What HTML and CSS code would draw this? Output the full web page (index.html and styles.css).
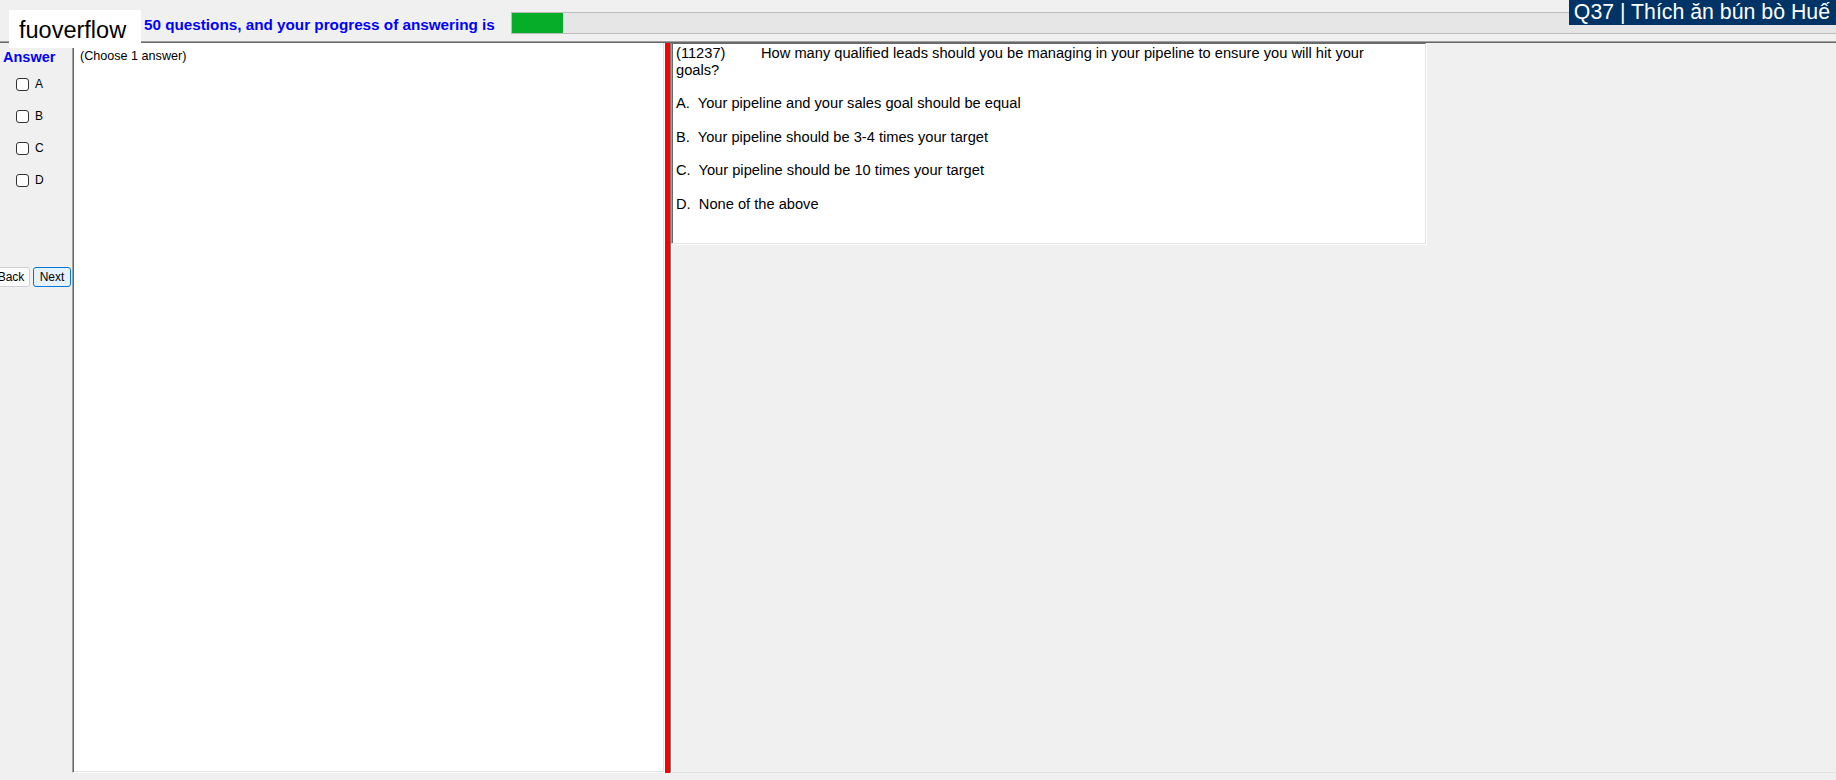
FILE: index.html
```html
<!DOCTYPE html>
<html>
	<head>
		<meta charset="utf-8">
		<title>fuoverflow</title>
		<link rel="stylesheet" href="styles.css">
	</head>
	<body>
		<div class="topbar">
			<div class="brand">fuoverflow</div>
			<div class="progress-label">50 questions, and your progress of answering is</div>
			<div class="progress"><div class="progress-fill" style="width: 51px;"></div></div>
			<div class="qtitle">Q37 | Thích ăn bún bò Huế</div>
		</div>

		<div class="main">
			<div class="sidebar">
				<div class="answer-title">Answer</div>
				<div class="options">
					<label class="opt"><input type="checkbox" name="A">A</label>
					<label class="opt"><input type="checkbox" name="B">B</label>
					<label class="opt"><input type="checkbox" name="C">C</label>
					<label class="opt"><input type="checkbox" name="D">D</label>
				</div>
				<div class="nav">
					<button class="btn back">Back</button>
					<button class="btn next">Next</button>
				</div>
			</div>

			<div class="answer-pane">(Choose 1 answer)</div>

			<div class="splitter"></div>

			<div class="question-area">
				<div class="question-box">
					<p class="stem"><span class="qid">(11237)</span>How many qualified leads should you be managing in your pipeline to ensure you will hit your<br>goals?</p>
					<p>A.&nbsp; Your pipeline and your sales goal should be equal</p>
					<p>B.&nbsp; Your pipeline should be 3-4 times your target</p>
					<p>C.&nbsp; Your pipeline should be 10 times your target</p>
					<p>D.&nbsp; None of the above</p>
				</div>
			</div>
		</div>
	</body>
</html>
```

FILE: styles.css
```css
body, html {
	height: 100%;
	min-height: 100%;
}

body {
	margin: 0;
	padding: 0;
	background: #f0f0f0;
	font-family: "Liberation Sans", Arial, sans-serif;
	color: #000;
	overflow: hidden;
}

/* top bar */

.topbar {
	position: relative;
	display: flex;
	align-items: flex-start;
	height: 42px;
	padding-left: 144px;
	border-bottom: 1px solid #a0a0a0;
	box-sizing: border-box;
}

.brand {
	position: absolute;
	left: 9px;
	top: 10px;
	width: 132px;
	height: 38px;
	padding: 3px 0 0 10px;
	box-sizing: border-box;
	background: #fff;
	font-size: 23.5px;
	line-height: 35px;
	z-index: 2;
}

.progress-label {
	margin-top: 16px;
	font-size: 15.25px;
	line-height: 17px;
	font-weight: bold;
	color: #0000ff;
	white-space: nowrap;
}

.progress {
	flex: 1;
	margin: 12px 0 0 16px;
	height: 22px;
	border: 1px solid #bcbcbc;
	border-right: 0;
	background: #e6e6e6;
	box-sizing: border-box;
}

.progress-fill {
	height: 100%;
	background: #06ad29;
}

.qtitle {
	position: absolute;
	right: 0;
	top: 0;
	height: 25px;
	padding: 0 6px 0 5px;
	background: #003366;
	color: #fff;
	font-size: 21.3px;
	line-height: 25px;
	white-space: nowrap;
}

/* main area */

.main {
	display: flex;
	height: calc(100% - 42px);
	padding-bottom: 7px;
	border-top: 1px solid #696969;
	box-sizing: border-box;
}

.sidebar {
	width: 72px;
	flex: none;
	padding-top: 6px;
	box-sizing: border-box;
}

.answer-title {
	padding-left: 3px;
	font-size: 14.5px;
	line-height: 16px;
	font-weight: bold;
	color: #0000ff;
}

.options {
	margin-top: 3px;
}

.opt {
	display: flex;
	align-items: center;
	height: 32px;
	font-size: 12px;
}

.opt input {
	-webkit-appearance: none;
	appearance: none;
	width: 13px;
	height: 13px;
	margin: 0 6px 0 16px;
	border: 1px solid #333;
	border-radius: 3px;
	background: #fff;
}

.nav {
	display: flex;
	margin-top: 71px;
}

.btn {
	width: 38px;
	height: 20px;
	padding: 0;
	font-family: "Liberation Sans", Arial, sans-serif;
	font-size: 12px;
	color: #000;
	border-radius: 3px;
	box-sizing: border-box;
}

.btn.back {
	margin-left: -8px;
	background: #fdfdfd;
	border: 1px solid #d0d0d0;
}

.btn.next {
	margin-left: 3px;
	background: #e5f1fb;
	border: 1px solid #0078d7;
}

.answer-pane {
	width: 593px;
	flex: none;
	padding: 6px 0 0 7px;
	background: #fff;
	border: 1px solid;
	border-color: transparent #fff #fff #a0a0a0;
	border-top: 0;
	box-shadow: inset 1px 0 #696969, inset -1px -1px #e3e3e3;
	font-size: 12.6px;
	line-height: 15px;
	box-sizing: border-box;
}

.splitter {
	width: 5px;
	flex: none;
	background: #ff0000;
}

.question-area {
	flex: 1;
	border-left: 1px solid #7a7a7a;
	border-bottom: 1px solid #e3e3e3;
}

.question-box {
	width: 755px;
	height: 201px;
	padding: 1px 3px 0 4px;
	background: #fff;
	border: 1px solid;
	border-color: #696969 #e3e3e3 #e3e3e3 #a0a0a0;
	box-shadow: inset 1px 0 #696969, 1px 1px 0 #fff;
	box-sizing: border-box;
	font-size: 14.67px;
	line-height: 16.5px;
}

.question-box p {
	margin: 17.1px 0 0;
}

.question-box p.stem {
	margin-top: 0;
}

.qid {
	display: inline-block;
	width: 85px;
}
```
